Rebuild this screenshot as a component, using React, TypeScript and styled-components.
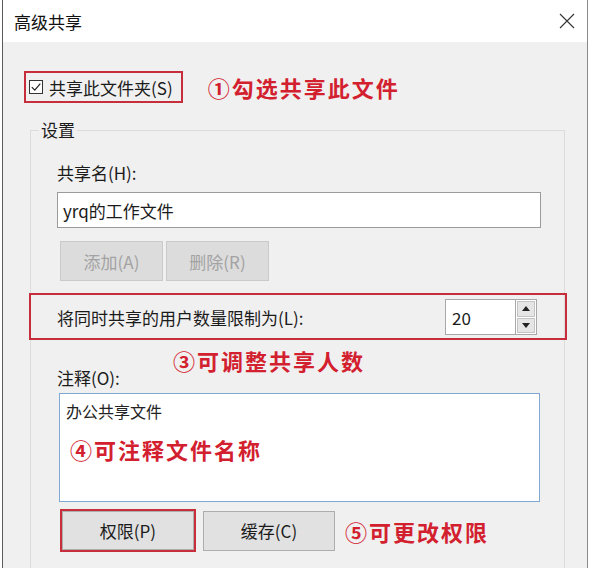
import React from 'react'
import styled, { createGlobalStyle } from 'styled-components'

const GlobalStyle = createGlobalStyle`
  html, body {
    margin: 0;
    padding: 0;
    background: #ffffff;
    overflow: hidden;
  }
  body {
    font-family: "Noto Sans CJK SC", "Microsoft YaHei", "Noto Sans", sans-serif;
    color: #1b1b1b;
  }
`

const Window = styled.div`
  margin-left: 2px;
  width: 586px;
  height: 100vh;
  overflow: hidden;
  box-sizing: border-box;
  border-left: 1px solid #5a5a5a;
  border-right: 1px solid #8a8a8a;
  display: flex;
  flex-direction: column;
  background: #f0f0f0;
`

const TitleBar = styled.div`
  flex: none;
  height: 42px;
  display: flex;
  align-items: center;
  justify-content: space-between;
  padding: 0 12px 0 11px;
  background: #ffffff;
  font-size: 17px;
  color: #111;
`

const Body = styled.div`
  padding-top: 29px;
`

const ShareRow = styled.div`
  display: flex;
  align-items: center;
  padding-left: 21px;
`

const ShareFrame = styled.label`
  display: flex;
  align-items: center;
  gap: 6px;
  height: 32px;
  box-sizing: border-box;
  padding: 0 8px 0 3px;
  border: 2px solid #c62e3c;
  font-size: 17px;
`

const Annotation = styled.span<{ $ml?: number; $mt?: number }>`
  display: block;
  margin-left: ${({ $ml }) => $ml ?? 0}px;
  margin-top: ${({ $mt }) => $mt ?? 0}px;
  font-size: 22px;
  line-height: 30px;
  font-weight: 700;
  letter-spacing: 2px;
  color: #d3202f;
  white-space: nowrap;
`

const Group = styled.fieldset`
  margin: 17px 0 0 27px;
  width: 535px;
  min-width: 0;
  box-sizing: border-box;
  border: 1px solid #dcdcdc;
  padding: 22px 23px 40px 26px;
`

const Legend = styled.legend`
  margin-left: -18px;
  padding: 0 2px;
  font-size: 17px;
  line-height: 20px;
`

const FieldLabel = styled.div`
  font-size: 17px;
  line-height: 22px;
`

const TextBox = styled.div`
  margin-top: 8px;
  height: 36px;
  box-sizing: border-box;
  display: flex;
  align-items: center;
  padding-left: 5px;
  background: #ffffff;
  border: 1px solid #9b9b9b;
  font-size: 17px;
`

const ButtonRow = styled.div`
  display: flex;
  gap: 3px;
  margin-top: 13px;
  padding-left: 3px;
`

const Button = styled.button<{ $muted?: boolean; $w?: number; $h?: number }>`
  width: ${({ $w }) => $w ?? 103}px;
  height: ${({ $h }) => $h ?? 40}px;
  padding: 0;
  font-family: inherit;
  font-size: 17px;
  background: ${({ $muted }) => ($muted ? '#dcdcdc' : '#e1e1e1')};
  border: 1px solid ${({ $muted }) => ($muted ? '#cacaca' : '#adadad')};
  color: ${({ $muted }) => ($muted ? '#a3a3a3' : '#1b1b1b')};
`

const LimitRow = styled.div`
  position: relative;
  margin-top: 18px;
  height: 36px;
  display: flex;
  align-items: center;
  justify-content: space-between;
  padding-right: 4px;
  font-size: 17px;

  &::after {
    content: '';
    position: absolute;
    top: -6px;
    bottom: -5px;
    left: -28px;
    right: -26px;
    border: 2px solid #c62e3c;
    pointer-events: none;
  }
`

const Spinner = styled.div`
  display: flex;
  height: 36px;
`

const SpinValue = styled.div`
  width: 70px;
  box-sizing: border-box;
  display: flex;
  align-items: center;
  padding-left: 6px;
  background: #ffffff;
  border: 1px solid #a8a8a8;
  border-right: none;
  font-size: 17px;
`

const SpinButtons = styled.div`
  width: 22px;
  display: flex;
  flex-direction: column;
  border: 1px solid #a8a8a8;
  box-sizing: border-box;
  background: #ffffff;
  padding: 1px;
  gap: 1px;
`

const SpinArrow = styled.div`
  flex: 1;
  display: flex;
  align-items: center;
  justify-content: center;
  background: #e5e5e5;
  border: 1px solid #c4c4c4;
`

const NoteHeader = styled.div`
  display: grid;
  grid-template-columns: 116px auto;
  margin-top: 10px;
`

const NoteLabel = styled(FieldLabel)`
  margin-top: 22px;
`

const NoteBox = styled.div`
  margin: 4px 1px 0 2px;
  height: 109px;
  box-sizing: border-box;
  padding: 6px 6px 0;
  background: #ffffff;
  border: 1px solid #7fa8d2;
`

const NoteText = styled.div`
  font-size: 16px;
  line-height: 22px;
  color: #222;
`

const ActionRow = styled.div`
  display: flex;
  align-items: center;
  margin-top: 7px;
  padding-left: 3px;
`

const PermFrame = styled.div`
  display: flex;
  border: 2px solid #c62e3c;
`

const CacheButton = styled(Button)`
  margin-left: 7px;
`

function CloseIcon() {
  return (
    <svg width="16" height="16" viewBox="0 0 16 16">
      <path d="M1 1 L15 15 M15 1 L1 15" stroke="#333" strokeWidth="1.1" fill="none" />
    </svg>
  )
}

function CheckBox() {
  return (
    <svg width="14" height="14" viewBox="0 0 14 14">
      <rect x="0.5" y="0.5" width="13" height="13" fill="#fff" stroke="#333" />
      <path d="M2.8 7.2 L5.8 10.2 L11.3 3.6" stroke="#222" strokeWidth="1.2" fill="none" />
    </svg>
  )
}

function Arrow({ up }: { up?: boolean }) {
  return (
    <svg width="8" height="5" viewBox="0 0 8 5">
      <path d={up ? 'M0 5 L4 0 L8 5 Z' : 'M0 0 L8 0 L4 5 Z'} fill="#222" />
    </svg>
  )
}

export default function App() {
  return (
    <>
      <GlobalStyle />
      <Window>
        <TitleBar>
          <span>高级共享</span>
          <CloseIcon />
        </TitleBar>
        <Body>
          <ShareRow>
            <ShareFrame>
              <CheckBox />
              共享此文件夹(S)
            </ShareFrame>
            <Annotation $ml={25}>①勾选共享此文件</Annotation>
          </ShareRow>

          <Group>
            <Legend>设置</Legend>
            <FieldLabel>共享名(H):</FieldLabel>
            <TextBox>yrq的工作文件</TextBox>
            <ButtonRow>
              <Button $muted>添加(A)</Button>
              <Button $muted>删除(R)</Button>
            </ButtonRow>

            <LimitRow>
              <span>将同时共享的用户数量限制为(L):</span>
              <Spinner>
                <SpinValue>20</SpinValue>
                <SpinButtons>
                  <SpinArrow>
                    <Arrow up />
                  </SpinArrow>
                  <SpinArrow>
                    <Arrow />
                  </SpinArrow>
                </SpinButtons>
              </Spinner>
            </LimitRow>

            <NoteHeader>
              <NoteLabel>注释(O):</NoteLabel>
              <Annotation>③可调整共享人数</Annotation>
            </NoteHeader>
            <NoteBox>
              <NoteText>办公共享文件</NoteText>
              <Annotation $ml={4} $mt={12}>④可注释文件名称</Annotation>
            </NoteBox>

            <ActionRow>
              <PermFrame>
                <Button $w={132} $h={39}>权限(P)</Button>
              </PermFrame>
              <CacheButton $w={132}>缓存(C)</CacheButton>
              <Annotation $ml={10}>⑤可更改权限</Annotation>
            </ActionRow>
          </Group>
        </Body>
      </Window>
    </>
  )
}
